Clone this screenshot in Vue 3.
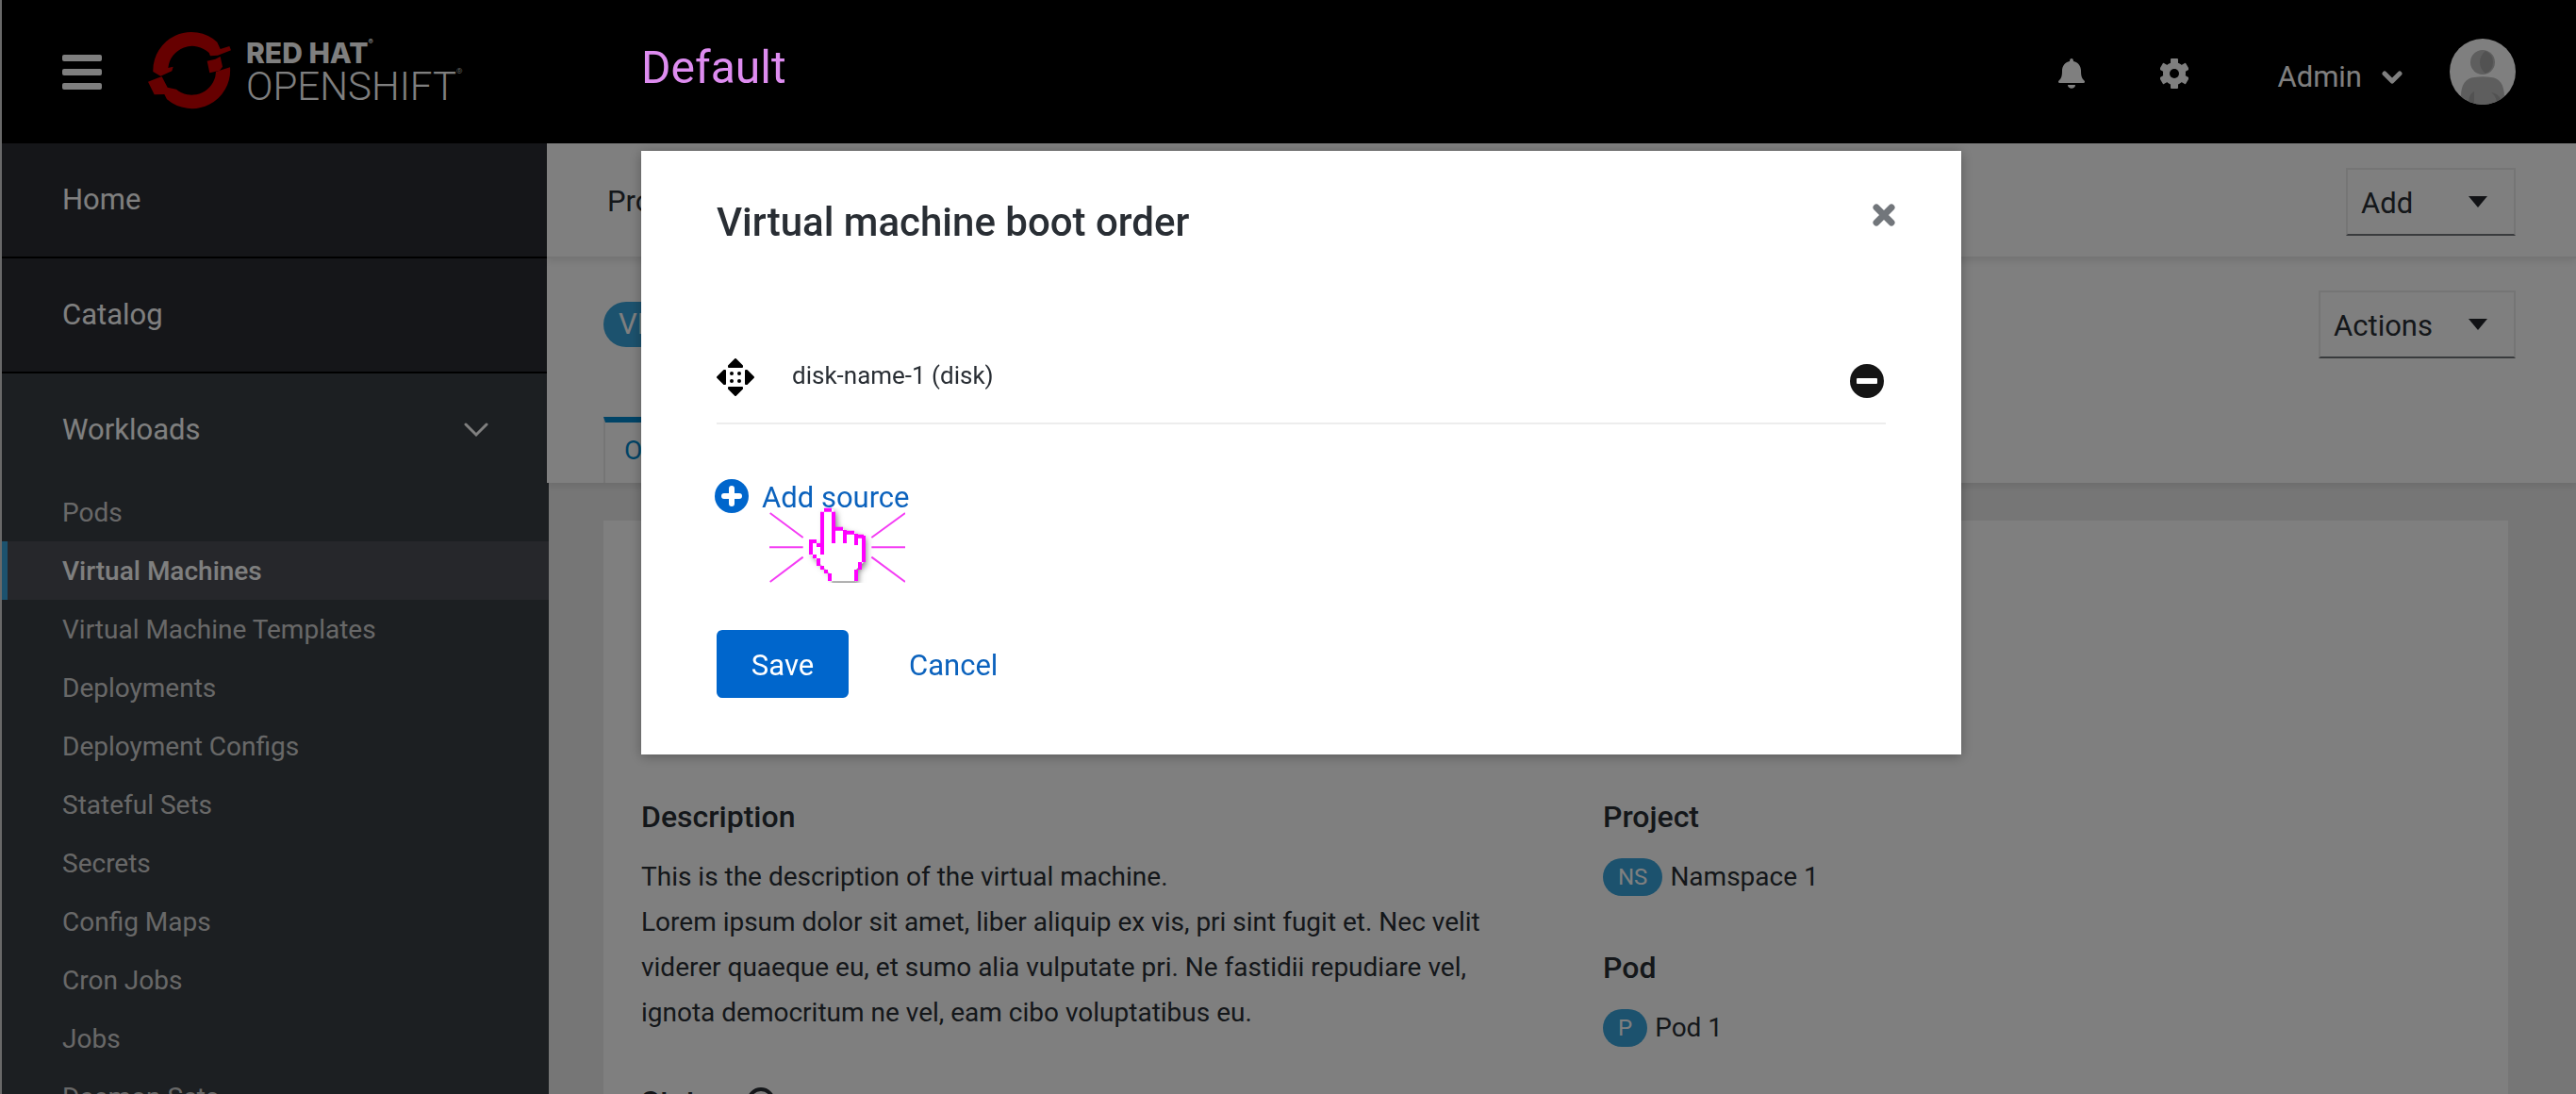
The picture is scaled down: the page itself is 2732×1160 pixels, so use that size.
<script setup>
const workloads = [
  'Pods',
  'Virtual Machines',
  'Virtual Machine Templates',
  'Deployments',
  'Deployment Configs',
  'Stateful Sets',
  'Secrets',
  'Config Maps',
  'Cron Jobs',
  'Jobs',
  'Daemon Sets',
]
const active = 'Virtual Machines'
const references = [
  { title: 'Project', badge: 'NS', name: 'Namspace 1' },
  { title: 'Pod', badge: 'P', name: 'Pod 1' },
]
const disks = ['disk-name-1 (disk)']
</script>

<template>
  <div class="page">
    <header class="masthead">
      <button class="plain menu" aria-label="Toggle navigation">
        <svg width="42" height="37" viewBox="0 0 42 37" fill="currentColor">
          <rect width="42" height="7" rx="2" /><rect y="15" width="42" height="7" rx="2" /><rect y="30" width="42" height="7" rx="2" />
        </svg>
      </button>
      <a class="brand" href="#">
        <svg width="88" height="84" viewBox="22 36 264 252" fill="#cc0000" aria-hidden="true">
          <path d="M38 168A122 122 0 0 1 242 74L252 96 281 87 286 100 244 116 220 118 216 108A77 77 0 0 0 86 156L102 152 98 166 62 182Z" />
          <path d="M210 134L236 128 252 120 259 152 250 164 218 172Z" />
          <path d="M238 168L283 154A122 122 0 0 1 82 256L74 240 42 241 22 200 52 188 66 184 84 218 112 224A77 77 0 0 0 236 184Z" />
        </svg>
        <span class="wordmark">
          <span class="redhat">RED HAT<sup>®</sup></span>
          <span class="product">OPENSHIFT<sup>®</sup></span>
        </span>
      </a>
      <div class="tools">
        <button class="plain bell" aria-label="Notifications">
          <svg width="28" height="32" viewBox="0 0 28 32" fill="currentColor">
            <path d="M14 0c1.200 0 2 1 2 3 5 1 8 5 8 10 0 6 1 8 3 10 2 2 1 3-1 3H2c-2 0-3-1-1-3 2-2 3-4 3-10C4 8 7 4 12 3c0-2 .8-3 2-3zM10 28h8c0 5-8 5-8 0z" />
          </svg>
        </button>
        <button class="plain gear" aria-label="Settings">
          <svg width="30" height="32" viewBox="0 0 30 32">
            <g fill="currentColor">
              <circle cx="15" cy="16" r="12" />
              <rect x="11" width="8" height="32" rx="1" />
              <rect x="11" width="8" height="32" rx="1" transform="rotate(60 15 16)" />
              <rect x="11" width="8" height="32" rx="1" transform="rotate(-60 15 16)" />
            </g>
            <circle cx="15" cy="16" r="5" fill="#000" />
          </svg>
        </button>
        <button class="plain user">
          Admin
          <svg width="22" height="16" viewBox="0 0 22 16" fill="none" stroke="currentColor" stroke-width="5" stroke-linecap="round" stroke-linejoin="round"><path d="M3 4l8 8 8-8" /></svg>
        </button>
        <svg class="avatar" width="70" height="70" viewBox="0 0 70 70" role="img" aria-label="Admin">
          <clipPath id="face"><circle cx="35" cy="35" r="35" /></clipPath>
          <g clip-path="url(#face)">
            <rect width="70" height="70" fill="#fff" />
            <path fill="#bcbcbc" d="M12 70V62c0-14 5-20 14-21 6-1 12-1 18 0 9 1 14 7 14 21v8z" />
            <circle cx="35" cy="25" r="13" fill="#bcbcbc" />
            <path fill="#a4a4a4" d="M38 13a13 13 0 0 1 0 24c-8-6-8-18 0-24zM26 56v14h-6c0-8 2-12 6-14zM44 57c6 1 10 4 11 10l-5 3c0-6-2-10-6-13z" />
          </g>
        </svg>
      </div>
    </header>

    <div class="body">
      <nav class="sidebar">
        <a class="section" href="#">Home</a>
        <a class="section" href="#">Catalog</a>
        <button class="plain section expanded" aria-expanded="true">
          Workloads
          <svg width="26" height="16" viewBox="0 0 26 16" fill="none" stroke="currentColor" stroke-width="3" stroke-linecap="round"><path d="M2 2l11 11L24 2" /></svg>
        </button>
        <a v-for="item in workloads" :key="item" href="#" class="item" :class="{ active: item === active }">{{ item }}</a>
      </nav>

      <main class="content">
        <div class="bar project-bar">
          <span>Project: default</span>
          <button class="dropdown">Add <span class="caret"></span></button>
        </div>
        <div class="bar resource-bar">
          <div class="resource-head">
            <span class="badge large">VM</span>
            <button class="dropdown">Actions <span class="caret"></span></button>
          </div>
          <a class="tab" href="#">Overview</a>
        </div>
        <section class="card">
          <div>
            <h2>Description</h2>
            <p class="text">
              This is the description of the virtual machine.<br />
              Lorem ipsum dolor sit amet, liber aliquip ex vis, pri sint fugit et. Nec velit viderer quaeque eu, et sumo alia vulputate pri. Ne fastidii repudiare vel, ignota democritum ne vel, eam cibo voluptatibus eu.
            </p>
            <h2 class="status">
              Status
              <svg width="30" height="30" viewBox="0 0 30 30" fill="none" stroke="currentColor" stroke-width="4" aria-hidden="true"><circle cx="15" cy="15" r="13" /></svg>
            </h2>
          </div>
          <div>
            <template v-for="r in references" :key="r.title">
              <h2>{{ r.title }}</h2>
              <p class="text reference"><span class="badge">{{ r.badge }}</span>{{ r.name }}</p>
            </template>
          </div>
        </section>
      </main>
    </div>

    <div class="backdrop">
      <p class="state">Default</p>
      <div class="modal" role="dialog" aria-modal="true" aria-labelledby="modal-title">
        <h1 id="modal-title">Virtual machine boot order</h1>
        <button class="plain close" aria-label="Close">
          <svg width="24" height="24" viewBox="0 0 24 24" stroke="currentColor" stroke-width="7" stroke-linecap="round"><path d="M4 4l16 16M20 4L4 20" /></svg>
        </button>
        <ul class="disks">
          <li v-for="disk in disks" :key="disk">
            <svg width="40" height="40" viewBox="0 0 40 40" aria-hidden="true">
              <g stroke="#000" stroke-width="2" stroke-linejoin="round">
                <path d="M20 1l7 7v1H13V8z" /><path d="M20 39l7-7v-1H13v1z" /><path d="M1 20l7-7h1v14H8z" /><path d="M39 20l-7-7h-1v14h1z" />
              </g>
              <circle cx="16" cy="16" r="2" /><circle cx="24" cy="16" r="2" /><circle cx="16" cy="24" r="2" /><circle cx="24" cy="24" r="2" />
            </svg>
            <span class="disk-name">{{ disk }}</span>
            <button class="plain remove" aria-label="Remove disk">
              <svg width="36" height="36" viewBox="0 0 36 36"><circle cx="18" cy="18" r="18" fill="#151515" /><rect x="7" y="15" width="22" height="6" rx="1" fill="#fff" /></svg>
            </button>
          </li>
        </ul>
        <div class="add-row">
          <button class="plain link add">
            <svg width="36" height="36" viewBox="0 0 36 36"><circle cx="18" cy="18" r="18" fill="#0066cc" /><path d="M18 10v16M10 18h16" stroke="#fff" stroke-width="6" stroke-linecap="round" /></svg>
            <span>Add source</span>
          </button>
          <svg class="pointer" width="144" height="80" viewBox="228 204 432 240" aria-hidden="true">
            <g stroke="#f43df4" stroke-width="6">
              <path d="M230 222l105 78M228 331h107M230 441l105-79M553 300l107-78M553 331h107M553 362l107 79" />
            </g>
            <path class="hand" fill="#fff" d="M396 210h36l6 60h24l6 12h30l6 12h24v84l-24 24v38h-78l-6-26-60-60v-42l36 13z" />
            <path fill="none" stroke="#ff00ff" stroke-width="12" d="M402 212h24M396 218v136M432 218v100M438 272h24M468 276v42M474 284h24M504 288v36M510 296h18M528 294v84M516 378v24M504 402v36M354 312h24M360 306v48M378 324h18M372 354v12M384 366v24M396 390v12M408 402v12M420 414v24" />
            <path stroke="#aaa" stroke-width="5" d="M427 441h76" />
          </svg>
        </div>
        <footer class="actions">
          <button class="primary">Save</button>
          <button class="plain link cancel">Cancel</button>
        </footer>
      </div>
    </div>
  </div>
</template>

<style>
body { margin: 0; }
</style>

<style scoped>
* { box-sizing: border-box; }
.page {
  height: 100vh;
  overflow: hidden;
  display: flex;
  flex-direction: column;
  border-left: 2px solid #d2d2d2;
  background: #ededed;
  color: #292e34;
  font-family: Roboto, "Open Sans", sans-serif;
  font-size: 31px;
  line-height: 40px;
}
h1, h2, p, ul { margin: 0; padding: 0; }
a { color: inherit; text-decoration: none; }
button { font: inherit; }
svg { display: block; flex: none; }
.plain { padding: 0; border: 0; background: none; color: inherit; }

.masthead {
  display: flex;
  align-items: center;
  flex: none;
  height: 152px;
  padding: 0 64px;
  background: #000;
  color: #fff;
}
.brand { display: flex; align-items: center; gap: 16px; margin-left: 49px; padding-bottom: 4px; }
.wordmark { display: flex; flex-direction: column; padding-top: 4px; }
.redhat { font-family: Inter, sans-serif; font-size: 30px; font-weight: 800; line-height: 32px; }
.product { font-size: 42px; font-weight: 300; line-height: 40px; }
sup { font-size: 8px; line-height: 8px; vertical-align: top; }
.tools { display: flex; align-items: center; margin-left: auto; }
.bell, .gear { padding-top: 4px; }
.gear { margin-left: 80px; }
.user { display: flex; align-items: center; gap: 21px; margin-left: 94px; padding-top: 12px; }
.avatar { margin-left: 50px; }

.body { display: flex; flex: 1; min-height: 0; }
.sidebar { flex: none; width: 580px; background: #393f44; color: #fff; overflow: hidden; }
.section {
  display: flex;
  align-items: center;
  width: 100%;
  height: 122px;
  padding: 0 64px;
  border-bottom: 2px solid #000;
  background: #2a2c33;
}
.expanded { justify-content: space-between; height: 116px; padding-top: 4px; border: 0; background: none; }
.item {
  display: flex;
  align-items: center;
  height: 62px;
  padding: 2px 64px 0;
  font-size: 28px;
  color: #d1d1d1;
}
.item.active {
  padding-left: 58px;
  border-left: 6px solid #39a5dc;
  background: #4d4f56;
  color: #fff;
  font-weight: 500;
}

.content { flex: 1; min-width: 0; }
.bar { position: relative; margin-left: -2px; background: #fff; border-bottom: 2px solid #ebebeb; box-shadow: 0 3px 8px rgba(0, 0, 0, 0.1); }
.project-bar { display: flex; align-items: center; justify-content: space-between; height: 122px; padding: 4px 64px 0; z-index: 1; }
.resource-bar { height: 238px; padding: 34px 64px 0 60px; border: 0; display: flex; flex-direction: column; justify-content: space-between; }
.resource-head { display: flex; justify-content: space-between; }
.dropdown {
  display: flex;
  align-items: center;
  justify-content: space-between;
  min-width: 180px;
  height: 72px;
  padding: 4px 28px 0 14px;
  gap: 38px;
  border: 2px solid #ebebeb;
  border-bottom-color: #72767b;
  background: #fff;
  color: inherit;
}
.caret { margin-bottom: 4px; border: 10px solid transparent; border-top: 12px solid #22252b; border-bottom: 0; }
.badge {
  height: 40px;
  padding: 0 16px;
  border-radius: 24px;
  background: #39a5dc;
  color: #fff;
  font-size: 24px;
  line-height: 40px;
}
.badge.large { height: 48px; margin-top: 12px; font-size: 31px; line-height: 48px; }
.tab {
  align-self: flex-start;
  height: 70px;
  padding: 10px 20px 0;
  border: solid #ebebeb;
  border-width: 6px 2px 0;
  border-top-color: #0088ce;
  color: #0088ce;
  font-size: 28px;
}
.card {
  display: grid;
  grid-template-columns: 17fr 16fr;
  height: 100%;
  margin: 40px 72px 0 58px;
  padding: 294px 0 0 40px;
  background: #fff;
}
h2 { font-size: 32px; font-weight: 500; line-height: 40px; }
.text { max-width: 920px; margin: 20px 0 52px; font-size: 28px; line-height: 48px; }
.reference { display: flex; align-items: center; gap: 8px; }
.status { display: flex; align-items: center; gap: 20px; line-height: 36px; }

.backdrop {
  position: fixed;
  inset: 0;
  z-index: 2;
  display: flex;
  align-items: flex-start;
  justify-content: center;
  padding: 160px 0 0 28px;
  background: rgba(0, 0, 0, 0.5);
}
.state { position: absolute; top: 46px; left: 680px; color: #de8cf0; font-size: 48px; line-height: 52px; }
.modal {
  position: relative;
  width: 1400px;
  max-width: 90%;
  padding: 50px 80px 60px;
  background: #fff;
  box-shadow: 0 2px 12px rgba(0, 0, 0, 0.3);
}
h1 { font-size: 42px; font-weight: 500; line-height: 52px; }
.close { position: absolute; top: 46px; right: 60px; padding: 10px; color: #72767b; }
.disks { margin-top: 90px; list-style: none; }
.disks li { display: flex; align-items: center; gap: 40px; height: 98px; border-bottom: 2px solid #ededed; }
.disk-name { padding-bottom: 4px; font-size: 26px; }
.remove { margin-left: auto; margin-right: 2px; padding-top: 8px; }
.add-row { position: relative; margin-top: 56px; }
.link { color: #0b62bd; }
.add { display: flex; align-items: center; gap: 14px; height: 40px; margin-left: -2px; }
.add span { padding-top: 4px; }
.pointer { position: absolute; top: 32px; left: 56px; }
.hand { filter: drop-shadow(8px 8px 10px rgba(0, 0, 0, 0.5)); }
.actions { display: flex; gap: 64px; margin-top: 122px; }
.primary { width: 140px; height: 72px; padding: 4px 0 0; border: 0; border-radius: 6px; background: #0066cc; color: #fff; }
.cancel { padding-top: 4px; }
</style>
